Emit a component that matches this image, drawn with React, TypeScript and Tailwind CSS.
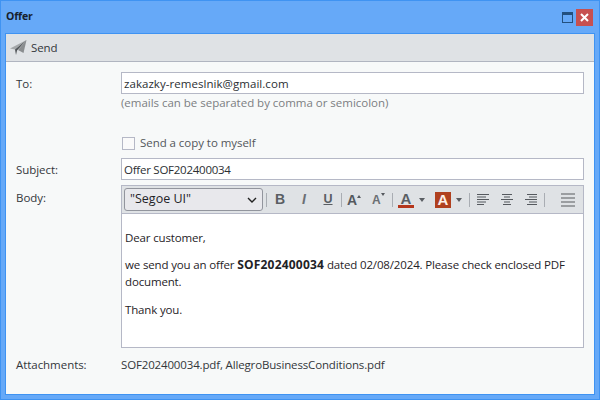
const sans = "font-['Open_Sans','Noto_Sans',sans-serif]";
const arial = "font-['Liberation_Sans',sans-serif]";

function Sep({ className = "" }: { className?: string }) {
  return <div className={"w-px h-[14px] bg-[#a9adb3] shrink-0 " + className} />;
}
function Caret({ className = "" }: { className?: string }) {
  return <div className={"w-0 h-0 border-x-[3.5px] border-x-transparent border-t-[4px] border-t-[#5a5e63] shrink-0 " + className} />;
}
function Align({ kind, className = "" }: { kind: "l" | "c" | "r"; className?: string }) {
  const xs = kind === "l" ? [0, 0, 0, 0, 0] : kind === "c" ? [1, 3, 0, 3, 2] : [2, 4, 0, 4, 2];
  const ws = kind === "l" ? [12, 9, 12, 9, 7] : kind === "c" ? [10, 6, 12, 6, 8] : [10, 8, 12, 8, 10];
  return (
    <svg width="13" height="12" viewBox="0 0 13 12" className={"shrink-0 " + className}>
      {xs.map((x, i) => (
        <rect key={i} x={x} y={i * 2.5} width={ws[i]} height="1" fill="#55595e" />
      ))}
    </svg>
  );
}
function Row({ label, children, className = "", labelClass = "" }: { label: string; children: React.ReactNode; className?: string; labelClass?: string }) {
  return (
    <div className={"flex " + className}>
      <div className={"w-[105px] shrink-0 text-[11.5px] leading-[22px] tracking-[-0.05px] text-[#33373b] " + labelClass}>{label}</div>
      <div className="flex-1 min-w-0">{children}</div>
    </div>
  );
}
function Input({ value, className = "" }: { value: string; className?: string }) {
  return (
    <div className={"h-[22px] border border-[#b5b8c6] bg-white pl-[2px] text-[11.5px] leading-[21px] text-[#2b2f33] " + className}>
      {value}
    </div>
  );
}

export default function App() {
  return (
    <div className={"w-[600px] h-[400px] flex flex-col bg-[#66a9f8] border border-[#3f93f2] overflow-hidden " + sans}>
      <div className="h-[32px] shrink-0 flex items-center pl-[5px] pr-[6px]">
        <div className="flex-1 text-[10.5px] font-bold text-[#16202c] tracking-[-0.2px]">Offer</div>
        <div className="w-[11px] h-[11px] border border-[#23507f] border-t-[3px] mr-[3px]" />
        <div className="w-[17px] h-[17px] bg-[#c75050] flex items-center justify-center">
          <svg width="9" height="9" viewBox="0 0 9 9">
            <path d="M1 1l7 7M8 1L1 8" stroke="#fff" strokeWidth="2" />
          </svg>
        </div>
      </div>
      <div className="mx-[4px] mb-[4px] flex-1 min-h-0 flex flex-col bg-[#f7f9f9] border border-[#3f93f2]">
        <div className="h-[28px] shrink-0 flex items-center gap-[4px] pl-[4px] bg-[#dfe2e5] border-b border-[#b0b5c0]">
          <svg width="17" height="17" viewBox="0 0 17 17" className="shrink-0">
            <path d="M0 9.5L16.5 1 5 10.5z" fill="#a4a7a9" />
            <path d="M16.5 1L13.5 14 8 11z" fill="#8a8d8f" />
            <path d="M5 10.5L16.5 1 7 11.5 6 16z" fill="#4f5356" />
          </svg>
          <span className="text-[11.5px] text-[#33373b] tracking-[-0.1px]">Send</span>
        </div>
        <div className="flex-1 flex flex-col px-[10px] pt-[10px]">
          <Row label="To:" labelClass="pt-[1px]">
            <Input value="zakazky-remeslnik@gmail.com" className="tracking-[0.05px]" />
            <div className="text-[11.5px] leading-[16px] mt-[1px] text-[#7b7e82] tracking-[-0.02px]">
              (emails can be separated by comma or semicolon)
            </div>
          </Row>
          <Row label="" className="mt-[22px]">
            <div className="flex items-center gap-[6px] h-[20px] pl-[1px]">
              <div className="w-[13px] h-[13px] border border-[#b5b8c6] bg-[#fafafa]" />
              <span className="text-[11.5px] text-[#53575b] tracking-[-0.05px] -ml-[1px]">Send a copy to myself</span>
            </div>
          </Row>
          <Row label="Subject:" className="mt-[5px]" labelClass="pt-[1px]">
            <Input value="Offer SOF202400034" className="tracking-[-0.25px]" />
          </Row>
          <Row label="Body:" className="mt-[4px]" labelClass="pt-[2px]">
            <div className="h-[163px] flex flex-col border border-[#b5b8c6] bg-white">
              <div className="h-[28px] shrink-0 flex items-center bg-[#dfe2e5] border-b border-[#b5b8c6]">
                <div className="ml-[2px] w-[139px] h-[23px] shrink-0 rounded-[3px] border border-[#92959d] bg-[#e8e8ec] flex items-center justify-between pl-[5px] pr-[5px] text-[12.5px] text-[#1f2327]">
                  <span>"Segoe UI"</span>
                  <svg width="10" height="6" viewBox="0 0 10 6">
                    <path d="M1 1l4 4 4-4" fill="none" stroke="#222" strokeWidth="1.4" />
                  </svg>
                </div>
                <Sep className="ml-[3px]" />
                <span className={"ml-[7px] w-[12px] text-center text-[14px] font-bold text-[#5a5e63] " + arial}>B</span>
                <span className={"ml-[12px] w-[12px] text-center text-[14px] font-bold italic text-[#6b6f74] " + arial}>I</span>
                <span className={"ml-[12px] w-[12px] text-center text-[12.5px] font-bold underline text-[#5a5e63] " + arial}>U</span>
                <Sep className="ml-[7px]" />
                <div className="flex items-start ml-[5px] w-[15px] shrink-0">
                  <span className={"text-[14px] leading-[14px] font-bold text-[#55595e] " + arial}>A</span>
                  <div className="w-0 h-0 mt-[2px] border-x-[2.5px] border-x-transparent border-b-[3px] border-b-[#55595e]" />
                </div>
                <div className="flex items-start ml-[10px] w-[14px] shrink-0">
                  <span className={"text-[12px] leading-[14px] mt-[1px] font-bold text-[#6b6f74] " + arial}>A</span>
                  <div className="w-0 h-0 mt-[1px] border-x-[2.5px] border-x-transparent border-t-[3px] border-t-[#55595e]" />
                </div>
                <Sep className="ml-[6px]" />
                <div className="ml-[5px] w-[16px] h-[16px] flex flex-col items-center shrink-0">
                  <span className={"text-[15px] leading-[13px] font-bold text-[#5a5e63] " + arial}>A</span>
                  <div className="w-[16px] h-[3px] bg-[#b5371c]" />
                </div>
                <Caret className="ml-[5px]" />
                <div className="ml-[10px] w-[16px] h-[16px] bg-[#b0401f] flex items-center justify-center shrink-0">
                  <span className={"text-[15px] leading-[13px] font-bold text-[#fdf0e8] " + arial}>A</span>
                </div>
                <Caret className="ml-[5px]" />
                <Sep className="ml-[7px]" />
                <Align kind="l" className="ml-[7px]" />
                <Align kind="c" className="ml-[11px]" />
                <Align kind="r" className="ml-[11px]" />
                <Sep className="ml-[6px]" />
                <div className="ml-[16px] flex flex-col gap-[2px] w-[14px] shrink-0">
                  <div className="h-[2px] bg-[#9b9ea1]" />
                  <div className="h-[2px] bg-[#9b9ea1]" />
                  <div className="h-[2px] bg-[#9b9ea1]" />
                  <div className="h-[2px] bg-[#9b9ea1]" />
                </div>
              </div>
              <div className="px-[3px] pt-[15px] text-[11.5px] leading-[17px] text-[#1f2327] tracking-[-0.15px]">
                <p>Dear customer,</p>
                <p className="mt-[10px]">
                  we send you an offer <b className="text-[12px] leading-[17px] tracking-[0.2px]">SOF202400034</b> dated 02/08/2024. Please check enclosed PDF document.
                </p>
                <p className="mt-[11px]">Thank you.</p>
              </div>
            </div>
          </Row>
          <Row label="Attachments:" className="mt-[6px]">
            <div className="text-[11.5px] leading-[22px] text-[#33373b] tracking-[-0.15px]">
              SOF202400034.pdf, AllegroBusinessConditions.pdf
            </div>
          </Row>
        </div>
      </div>
    </div>
  );
}
